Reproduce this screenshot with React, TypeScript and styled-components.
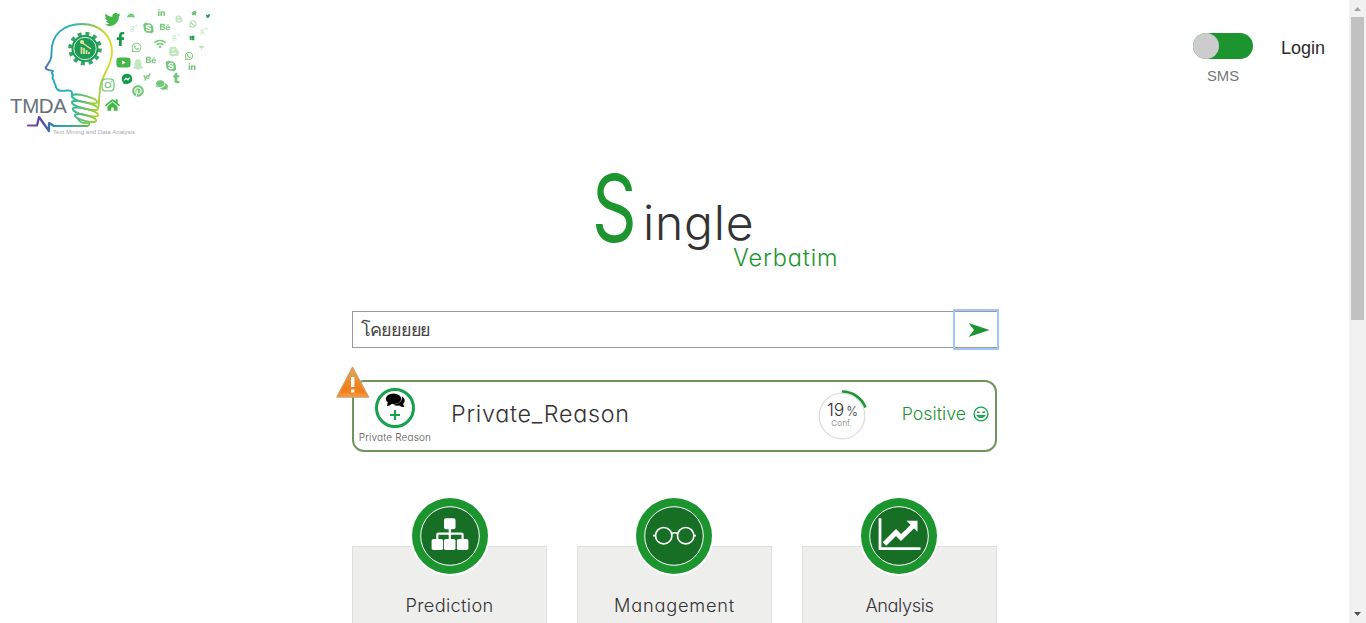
import React from "react";
import styled, { createGlobalStyle } from "styled-components";
import {
  FaTwitter, FaAndroid, FaLinkedinIn, FaBloggerB, FaHome, FaSkype, FaBehance,
  FaWhatsapp, FaFacebookF, FaWifi, FaWindows, FaYoutube, FaSnapchatGhost, FaFacebookMessenger,
  FaYahoo, FaTumblr, FaComments, FaPinterest, FaInstagram,
} from "react-icons/fa";

const GlobalStyle = createGlobalStyle`
  * { box-sizing: border-box; }
  body { margin: 0; background: #fff; overflow: hidden; }
`;

const gothic = `"Century Gothic", Inter, "Noto Sans", sans-serif`;

const Page = styled.div`
  display: flex;
  height: 623px;
  overflow: hidden;
  font-family: ${gothic};
  font-weight: 300;
  font-feature-settings: "cv11";
  color: #333;
`;
const Content = styled.div`
  flex: 1;
  display: flex;
  flex-direction: column;
`;
const Header = styled.header`
  display: flex;
  justify-content: space-between;
  height: 140px;
`;
const HeaderActions = styled.div`
  display: flex;
  gap: 28px;
  padding: 33px 25px 0 0;
  font-family: "Liberation Sans", Arial, sans-serif;
  font-weight: 400;
`;
const SwitchGroup = styled.div`
  display: flex;
  flex-direction: column;
  align-items: center;
  gap: 8px;
  width: 60px;
  font-size: 14.8px;
  line-height: 18px;
  color: #777;
`;
const Switch = styled.div`
  width: 60px;
  height: 26px;
  border-radius: 13px;
  background: #1d952f;
`;
const Knob = styled.div`
  width: 26px;
  height: 26px;
  border-radius: 50%;
  background: #ccc;
`;
const Login = styled.a`
  font-size: 18px;
  line-height: 30px;
  width: 43px;
  color: #2b2b2b;
`;
const Main = styled.main`
  width: 645px;
  margin-left: 352px;
  display: flex;
  flex-direction: column;
`;
const Title = styled.h1`
  margin: 0;
  height: 171px;
  padding: 20px 0 0 240px;
  font-weight: 300;
`;
const TitleTop = styled.div`
  display: flex;
  align-items: flex-start;
  height: 86px;
`;
const Initial = styled.span`
  width: 51px;
  font-weight: 400;
  font-size: 94px;
  line-height: 96px;
  color: #1d952f;
  transform: scaleX(0.74);
  transform-origin: 0 50%;
`;
const Rest = styled.span`
  padding-top: 33px;
  font-size: 48px;
  line-height: 60px;
  letter-spacing: 0.8px;
`;
const Subtitle = styled.div`
  padding-left: 141px;
  font-size: 23.5px;
  line-height: 24px;
  letter-spacing: 0.9px;
  color: #1d952f;
`;
const SearchRow = styled.div`
  display: flex;
  height: 37px;
  width: 646px;
  border: 1px solid #9b9b9b;
`;
const Query = styled.div`
  flex: 1;
  padding-left: 8px;
  font-size: 18px;
  letter-spacing: -1.1px;
  line-height: 35px;
  color: #444;
`;
const Send = styled.button`
  width: 42px;
  height: 37px;
  margin: -1px 0 0 0;
  padding: 0 0 0 6px;
  border: 0;
  background: transparent;
  outline: 2px solid #a3c4fb;
  outline-offset: 0;
  display: flex;
  align-items: center;
  justify-content: center;
`;
const Result = styled.section`
  position: relative;
  display: flex;
  height: 72px;
  margin-top: 32px;
  border: 2px solid #6f965f;
  border-radius: 12px;
`;
const Warning = styled.svg`
  position: absolute;
  left: -19px;
  top: -17px;
`;
const Category = styled.div`
  width: 82px;
  padding-top: 6px;
  display: flex;
  flex-direction: column;
  align-items: center;
`;
const CategoryLabel = styled.span`
  font-size: 10px;
  line-height: 12px;
  letter-spacing: 0.15px;
  margin-top: 3px;
  white-space: nowrap;
  color: #555;
`;
const ReasonName = styled.div`
  width: 381px;
  padding-left: 15px;
  font-size: 23.3px;
  letter-spacing: 0.75px;
  line-height: 63px;
`;
const Confidence = styled.div`
  position: relative;
  width: 50px;
  height: 62px;
`;
const ConfidenceText = styled.div`
  position: absolute;
  inset: 20px 0 0 1px;
  display: flex;
  flex-direction: column;
  align-items: center;
`;
const Percent = styled.div`
  font-size: 17.5px;
  line-height: 15px;
  small { font-size: 12.5px; margin-left: 2px; }
`;
const ConfLabel = styled.span`
  font-size: 8.2px;
  line-height: 8px;
  margin: 0 2px 0 0;
  color: #777;
`;
const Sentiment = styled.div`
  flex: 1;
  display: flex;
  align-items: center;
  justify-content: flex-end;
  gap: 7px;
  padding: 0 6px 5px 0;
  font-size: 17.8px;
  color: #1d952f;
`;
const Cards = styled.div`
  display: flex;
  gap: 30px;
  margin-top: 46px;
`;
const CardColumn = styled.div`
  width: 195px;
  display: flex;
  flex-direction: column;
  align-items: center;
`;
const Badge = styled.div`
  z-index: 1;
  width: 80px;
  height: 80px;
  margin-bottom: -32px;
  flex: none;
`;
const CardBody = styled.div`
  width: 195px;
  height: 140px;
  padding-top: 46px;
  border: 1px solid #e0e0e0;
  background: #eeeeed;
  text-align: center;
  line-height: 24px;
`;
const CardName = styled.span<{ $track: number }>`
  font-size: 18.2px;
  letter-spacing: ${(p) => p.$track}px;
`;
const Scrollbar = styled.div`
  width: 17px;
  height: 623px;
  background: #f1f1f1;
  display: flex;
  flex-direction: column;
  align-items: center;
  justify-content: space-between;
`;
const Track = styled.div`
  flex: 1;
  width: 13px;
`;
const Thumb = styled.div`
  height: 303px;
  background: #c1c1c1;
`;

const GREEN = "#45b649";
const DARK = "#159a4c";
const MID = "#72c779";
const PALE = "#c0e6c2";

type Spot = [React.ComponentType<any>, number, number, number, string];

const spots: Spot[] = [
  [FaTwitter, 112.5, 19.5, 16, GREEN], [FaAndroid, 131, 15.5, 8, MID], [FaLinkedinIn, 161.5, 13, 8, MID],
  [FaHome, 194, 13, 5.5, GREEN], [FaTwitter, 208, 16, 4.5, DARK],
  [FaSkype, 148.5, 28, 12, MID], [FaBehance, 165, 27, 10, MID],
  [FaWhatsapp, 193, 24, 8, MID], [FaFacebookF, 120.5, 39, 14, DARK],
  [FaWifi, 160, 44, 12, MID], [FaWindows, 192, 38, 5.5, DARK],
  [FaWhatsapp, 136.5, 47.5, 11, MID], [FaWhatsapp, 189, 56, 9, GREEN],
  [FaWifi, 201.5, 47.5, 5, MID], [FaYoutube, 123.5, 62.5, 15, GREEN], [FaSnapchatGhost, 138, 64.5, 11, PALE],
  [FaBehance, 151, 60, 10, MID], [FaSkype, 171, 66, 12, MID], [FaLinkedinIn, 192, 67, 8, MID],
  [FaFacebookMessenger, 127, 79, 11, DARK], [FaYahoo, 147, 77, 8, MID], [FaTumblr, 176.5, 78, 11, MID],
  [FaComments, 162, 85, 12, MID], [FaPinterest, 138, 91, 12, MID], [FaInstagram, 108, 85, 15, MID],
  [FaHome, 112.5, 105, 15, GREEN],
];
const bloggers = [[179, 19, 8], [174, 51.5, 11]];
const pluses = [[134, 28], [204, 31], [176, 37]];

const Logo = () => (
  <svg width="220" height="140" viewBox="0 0 220 140">
    <defs>
      <linearGradient id="head" x1="45" y1="0" x2="113" y2="0" gradientUnits="userSpaceOnUse">
        <stop offset="0" stopColor="#5a68ae" />
        <stop offset="0.13" stopColor="#20a9be" />
        <stop offset="0.4" stopColor="#27b8ae" />
        <stop offset="0.65" stopColor="#76c45c" />
        <stop offset="0.9" stopColor="#ccd92f" />
        <stop offset="1" stopColor="#d7df23" />
      </linearGradient>
      <linearGradient id="coil" x1="72" y1="0" x2="99" y2="0" gradientUnits="userSpaceOnUse">
        <stop offset="0" stopColor="#35b89a" />
        <stop offset="0.5" stopColor="#6cc25f" />
        <stop offset="1" stopColor="#b5d334" />
      </linearGradient>
      <linearGradient id="pulse" x1="27" y1="0" x2="88" y2="0" gradientUnits="userSpaceOnUse">
        <stop offset="0" stopColor="#8446a4" />
        <stop offset="0.25" stopColor="#51489f" />
        <stop offset="0.5" stopColor="#259cc2" />
        <stop offset="1" stopColor="#62bd55" />
      </linearGradient>
    </defs>
    <g fill="none" strokeLinecap="round" strokeLinejoin="round">
      <path
        stroke="url(#head)"
        strokeWidth="1.9"
        d="M72 96V93Q72 90 67 90.500C60 91.500 57 91 55.500 86C56 84 53.500 83 54 81L52.500 78L53 75Q51 73 53 71C49 70 46 70 45.500 68C50 61 52 58 51.500 53C51 34 64 24 82 24C100 24 112 36 112 52C112 67 101 75 100 89Q99 99 98.500 107"
      />
      <g stroke="url(#coil)" strokeWidth="1.900">
        <ellipse cx="84.500" cy="99" rx="13" ry="3.300" transform="rotate(14 84.500 99)" />
        <ellipse cx="85" cy="105.500" rx="13.500" ry="3.300" transform="rotate(14 85 105.500)" />
        <ellipse cx="85.500" cy="112" rx="13" ry="3.300" transform="rotate(14 85.500 112)" />
        <ellipse cx="85.500" cy="118" rx="11" ry="3" transform="rotate(14 85.500 118)" />
        <path d="M78 119Q80 124 89 123Q90 126 86 126" />
      </g>
      <path stroke="url(#pulse)" strokeWidth="2.200" d="M28 125.500H37L39 117L49 131V123L54 126H87" />
    </g>
    <circle cx="85" cy="48.500" r="14.800" fill="none" stroke="#36a667" strokeWidth="4" strokeDasharray="3.900 3.848" />
    <circle cx="85" cy="48.500" r="13.500" fill="#1c9b54" />
    <circle cx="85" cy="48.500" r="11.200" fill="none" stroke="#d8eeda" strokeWidth="1" />
    <path d="M81.500 47V54M84 48V54M86.500 50V54M89 52V54" stroke="#eadf9c" strokeWidth="1.700" />
    <path d="M82 42.500L91 49" stroke="#eadf9c" strokeWidth="1.300" />
    <circle cx="82" cy="42" r="2" fill="#eadf9c" />
    {spots.map(([Icon, cx, cy, size, fill], i) => (
      <Icon key={i} x={cx - size / 2} y={cy - size / 2} size={size} color={fill} />
    ))}
    {bloggers.map(([cx, cy, size]) => (
      <FaBloggerB key={cx} x={cx - size / 2} y={cy - size / 2} size={size} color={PALE} />
    ))}
    {pluses.map(([cx, cy]) => (
      <text key={cx} x={cx - 4} y={cy + 2} fontFamily="Liberation Serif" fontSize="9" fontWeight="400" fill={PALE}>
        g<tspan fontSize="6" dy="-2">+</tspan>
      </text>
    ))}
    <text x="10" y="113" fontFamily="Liberation Sans" fontSize="20.500" fontWeight="400" fill="#6a7077" textLength="57">TMDA</text>
    <text x="53" y="133.500" fontFamily="Liberation Sans" fontSize="6" fontWeight="400" fill="#a3a8b2" textLength="82">Text Mining and Data Analysis</text>
  </svg>
);

const SitemapIcon = () => (
  <g fill="#fff">
    <rect x="34" y="20.300" width="11.500" height="11" rx="1.800" />
    <rect x="21.600" y="41" width="11.500" height="11" rx="1.800" />
    <rect x="34" y="41" width="11.500" height="11" rx="1.800" />
    <rect x="46.900" y="41" width="11.500" height="11" rx="1.800" />
    <path d="M39.800 30V42M27.300 42V37Q27.300 35.700 28.600 35.700H51Q52.600 35.700 52.600 37V42" fill="none" stroke="#fff" strokeWidth="2.200" />
  </g>
);
const GlassesIcon = () => (
  <g fill="none" stroke="#fff" strokeWidth="1.700">
    <circle cx="29.700" cy="37.700" r="8.200" />
    <circle cx="51.700" cy="37.700" r="8.200" />
    <path d="M37.500 36Q40.700 33.500 43.900 36M19 37.700H21.700M59.700 37.700H62" />
  </g>
);
const ChartIcon = () => (
  <g>
    <path d="M21 20.300V50.700H61.500" fill="none" stroke="#fff" strokeWidth="2.800" />
    <path d="M25.500 46L37 34.500L42 39.500L54.500 27.500" fill="none" stroke="#fff" strokeWidth="5" />
    <path d="M47.500 22.700H58.500V33.700Z" fill="#fff" />
  </g>
);

const cards = [
  { name: "Prediction", Icon: SitemapIcon, cx: 40, track: 0.35 },
  { name: "Management", Icon: GlassesIcon, cx: 39, track: 0.8 },
  { name: "Analysis", Icon: ChartIcon, cx: 39, track: -0.4 },
];

export default function App() {
  return (
    <Page>
      <GlobalStyle />
      <Content>
        <Header>
          <Logo />
          <HeaderActions>
            <SwitchGroup>
              <Switch><Knob /></Switch>
              <span>SMS</span>
            </SwitchGroup>
            <Login>Login</Login>
          </HeaderActions>
        </Header>
        <Main>
          <Title>
            <TitleTop>
              <Initial>S</Initial>
              <Rest>ingle</Rest>
            </TitleTop>
            <Subtitle>Verbatim</Subtitle>
          </Title>
          <SearchRow>
            <Query>โคยยยยย</Query>
            <Send aria-label="Send">
              <svg width="22" height="16" viewBox="0 0 22 16">
                <path d="M0.500 1L21.500 8L0.500 15L6 8Z" fill="#1d952f" />
              </svg>
            </Send>
          </SearchRow>
          <Result>
            <Warning width="36" height="34" viewBox="0 0 36 34">
              <defs>
                <linearGradient id="warn" x1="0" y1="0" x2="0" y2="1">
                  <stop offset="0" stopColor="#dcae70" />
                  <stop offset="0.45" stopColor="#e98a2c" />
                  <stop offset="0.8" stopColor="#f47d16" />
                  <stop offset="1" stopColor="#f3a04e" />
                </linearGradient>
              </defs>
              <path d="M17.500 2.500L33.500 32H2Z" fill="url(#warn)" stroke="#d99a55" strokeWidth="1.500" strokeLinejoin="round" />
              <path d="M17.700 12V22M17.700 24.500V27.500" stroke="#fff" strokeWidth="3.400" />
            </Warning>
            <Category>
              <svg width="40" height="40" viewBox="0 0 40 40">
                <circle cx="20" cy="20" r="18.500" fill="#fff" stroke="#14a24a" strokeWidth="3" />
                <path d="M27 8.500C31 11 30 14 28 16L29.500 19Q26 19 24 17.500Q20 18 18 16.500C24 16 27.500 13 27 8.500Z" fill="#000" />
                <ellipse cx="18.500" cy="10.800" rx="7.700" ry="5.300" fill="#000" />
                <path d="M13 13L12 18Q16 17.500 17 15Z" fill="#000" />
                <path d="M20 22V32M15 27H25" stroke="#14a24a" strokeWidth="2.200" />
              </svg>
              <CategoryLabel>Private Reason</CategoryLabel>
            </Category>
            <ReasonName>Private_Reason</ReasonName>
            <Confidence>
              <svg width="52" height="62" viewBox="0 0 52 62">
                <circle cx="25" cy="34" r="22.800" fill="none" stroke="#ddd" strokeWidth="1.300" />
                <path d="M25 9.500A25 25 0 0 1 48.500 25.500" fill="none" stroke="#1d952f" strokeWidth="2.600" />
              </svg>
              <ConfidenceText>
                <Percent>19<small>%</small></Percent>
                <ConfLabel>Conf.</ConfLabel>
              </ConfidenceText>
            </Confidence>
            <Sentiment>
              Positive
              <svg width="16" height="16" viewBox="0 0 16 16" fill="none" stroke="#14a24a" strokeWidth="1.400">
                <circle cx="8" cy="8" r="6.900" />
                <path d="M4 6.200H6.600M9.400 6.200H12M4.700 9.800H11.300Q8 13.300 4.700 9.800Z" />
              </svg>
            </Sentiment>
          </Result>
          <Cards>
            {cards.map(({ name, Icon, cx, track }) => (
              <CardColumn key={name}>
                <Badge>
                  <svg width="80" height="80" viewBox="0 0 80 80">
                    <circle cx={cx} cy="38.500" r="39.500" fill="#fff" />
                    <circle cx={cx} cy="38" r="38" fill="#1d952f" />
                    <circle cx={cx} cy="38" r="29.300" fill="#176f26" stroke="#fff" strokeWidth="1" />
                    <g transform={`translate(${cx - 40} 0)`}><Icon /></g>
                  </svg>
                </Badge>
                <CardBody><CardName $track={track}>{name}</CardName></CardBody>
              </CardColumn>
            ))}
          </Cards>
        </Main>
      </Content>
      <Scrollbar>
        <svg width="17" height="17" viewBox="0 0 17 17"><path d="M5 11H12L8.500 7Z" fill="#a3a3a3" /></svg>
        <Track><Thumb /></Track>
        <svg width="17" height="17" viewBox="0 0 17 17"><path d="M5 6H12L8.500 10Z" fill="#505050" /></svg>
      </Scrollbar>
    </Page>
  );
}
